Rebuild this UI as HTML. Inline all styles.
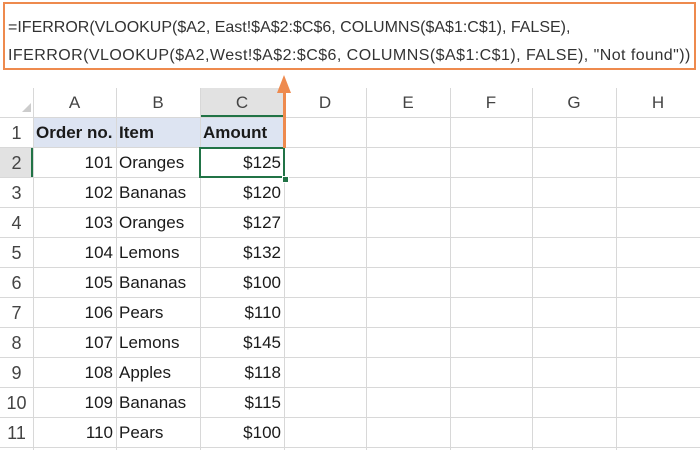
<!DOCTYPE html>
<html><head><style>
body{margin:0;width:700px;height:450px;background:#fff;position:relative;overflow:hidden;font-family:"Liberation Sans",sans-serif;color:#222}
.box{position:absolute;left:3px;top:2px;width:689px;height:64px;border:2px solid #ee8a4e;}
.f{position:absolute;left:8px;font-size:16px;white-space:nowrap;color:#333}
.c{position:absolute;font-size:17px;height:30px;line-height:30px;white-space:nowrap;box-sizing:border-box;padding:0 3px;color:#1a1a1a}
.vl{position:absolute;width:1px;background:#d8d8d8}
.hl{position:absolute;height:1px;background:#d8d8d8;left:0;width:700px}
.h{color:#444;text-align:center}
</style></head><body>
<div class="box"></div>
<div class="f" style="top:19px;letter-spacing:0px">=IFERROR(VLOOKUP($A2, East!$A$2:$C$6, COLUMNS($A$1:C$1), FALSE),</div>
<div class="f" style="top:47px;letter-spacing:0.45px">IFERROR(VLOOKUP($A2,West!$A$2:$C$6, COLUMNS($A$1:C$1), FALSE), "Not found"))</div>

<div style="position:absolute;left:33px;top:118px;width:251px;height:30px;background:#dde4f2"></div>
<div style="position:absolute;left:200px;top:88px;width:84px;height:29px;background:#e2e2e2;border-bottom:2px solid #217346;box-sizing:border-box"></div>
<div style="position:absolute;left:0;top:148px;width:33px;height:30px;background:#e2e2e2;border-right:2px solid #217346;box-sizing:border-box"></div>
<div style="position:absolute;left:22px;top:103px;width:0;height:0;border-left:9px solid transparent;border-bottom:9px solid #ccc"></div>

<div class="hl" style="top:117px"></div>
<div class="hl" style="top:147px"></div><div class="hl" style="top:177px"></div><div class="hl" style="top:207px"></div>
<div class="hl" style="top:237px"></div><div class="hl" style="top:267px"></div><div class="hl" style="top:297px"></div>
<div class="hl" style="top:327px"></div><div class="hl" style="top:357px"></div><div class="hl" style="top:387px"></div>
<div class="hl" style="top:417px"></div><div class="hl" style="top:447px"></div>
<div class="vl" style="left:33px;top:88px;height:362px"></div>
<div class="vl" style="left:116px;top:88px;height:362px"></div>
<div class="vl" style="left:200px;top:88px;height:362px"></div>
<div class="vl" style="left:284px;top:88px;height:362px"></div>
<div class="vl" style="left:366px;top:88px;height:362px"></div>
<div class="vl" style="left:450px;top:88px;height:362px"></div>
<div class="vl" style="left:532px;top:88px;height:362px"></div>
<div class="vl" style="left:616px;top:88px;height:362px"></div>

<div class="c h" style="left:33px;top:88px;width:83px">A</div>
<div class="c h" style="left:116px;top:88px;width:84px">B</div>
<div class="c h" style="left:200px;top:88px;width:84px">C</div>
<div class="c h" style="left:284px;top:88px;width:82px">D</div>
<div class="c h" style="left:366px;top:88px;width:84px">E</div>
<div class="c h" style="left:450px;top:88px;width:82px">F</div>
<div class="c h" style="left:532px;top:88px;width:84px">G</div>
<div class="c h" style="left:616px;top:88px;width:84px">H</div>

<div id="rows"></div>
<script>
var d=[["Order no.","Item","Amount"],[101,"Oranges","$125"],[102,"Bananas","$120"],[103,"Oranges","$127"],[104,"Lemons","$132"],[105,"Bananas","$100"],[106,"Pears","$110"],[107,"Lemons","$145"],[108,"Apples","$118"],[109,"Bananas","$115"],[110,"Pears","$100"]];
var h="";
d.forEach(function(r,i){var t=118+i*30;
h+='<div class="c h" style="left:0;top:'+t+'px;width:33px;font-size:18px">'+(i+1)+'</div>';
if(i==0){h+='<div class="c" style="left:33px;top:'+t+'px;font-weight:bold">'+r[0]+'</div><div class="c" style="left:116px;top:'+t+'px;font-weight:bold">'+r[1]+'</div><div class="c" style="left:200px;top:'+t+'px;font-weight:bold">'+r[2]+'</div>';}
else{h+='<div class="c" style="left:33px;top:'+t+'px;width:83px;text-align:right">'+r[0]+'</div><div class="c" style="left:116px;top:'+t+'px">'+r[1]+'</div><div class="c" style="left:200px;top:'+t+'px;width:84px;text-align:right">'+r[2]+'</div>';}
});
document.getElementById("rows").innerHTML=h;
</script>
<div style="position:absolute;left:199px;top:147px;width:86px;height:31px;border:2px solid #217346;box-sizing:border-box"></div>
<div style="position:absolute;left:282px;top:176px;width:5px;height:5px;background:#217346;border:1px solid #fff"></div>
<div style="position:absolute;left:283px;top:86px;width:3px;height:62px;background:#ee8a4e"></div>
<div style="position:absolute;left:277px;top:75px;width:0;height:0;border-left:7px solid transparent;border-right:7px solid transparent;border-bottom:18px solid #ee8a4e"></div>
</body></html>
